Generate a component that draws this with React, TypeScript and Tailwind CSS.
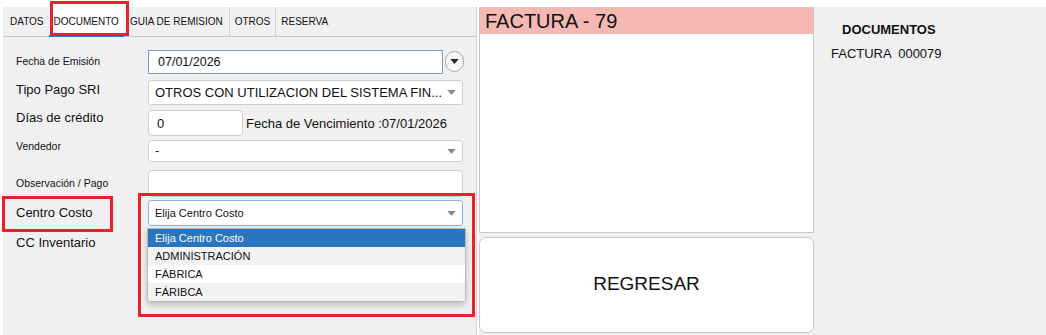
const Caret = ({ className }: { className?: string }) => (
    <svg className={className} viewBox="0 0 10 6" fill="currentColor">
        <path d="M0 0h10L5 6z" />
    </svg>
);

const TABS = [
    { label: 'DATOS', cls: 'pl-[7px] pr-[5px]' },
    { label: 'DOCUMENTO', cls: 'px-[5px] bg-white border-b-2 border-[#2f78c4] -mb-px', active: true },
    { label: 'GUIA DE REMISION', cls: 'px-[6px] border-r border-[#cfcfcf]' },
    { label: 'OTROS', cls: 'px-[5px] border-r border-[#cfcfcf]' },
    { label: 'RESERVA', cls: 'px-[5px]' },
];

const CENTROS = ['Elija Centro Costo', 'ADMINISTRACIÓN', 'FÁBRICA', 'FÁRIBCA'];

export default function App() {
    return (
        <div className="relative w-[1046px] h-[335px] overflow-hidden bg-white text-[#111] font-['Liberation_Sans',Arial,sans-serif]">
            <div className="flex mt-[7px] h-[328px]">
                {/* left form panel */}
                <div className="ml-[3px] w-[474px] bg-[#f0f0f0] border-r border-[#d4d4d4]">
                    <div className="flex h-[30px] border-b border-[#c9c9c9] text-[10px]">
                        {TABS.map((t) => (
                            <div key={t.label} className={`flex items-center ${t.cls}`}>{t.label}</div>
                        ))}
                    </div>

                    <div className="flex flex-col">
                        <div className="flex mt-[13px] h-[24px]">
                            <div className="w-[145px] pl-[13px] pt-[5px] text-[10.5px] leading-[12px]">Fecha de Emisión</div>
                            <div className="w-[295px] h-full bg-white border border-[#7f9db9] pl-[9px] flex items-center text-[12.5px]">07/01/2026</div>
                            <div className="ml-[2px] mt-[1px] w-[19px] h-[21px] rounded-full border border-[#a8a8a8] bg-[#f7f7f7] flex items-center justify-center">
                                <Caret className="w-[9px] h-[5px] text-[#222]" />
                            </div>
                        </div>

                        <div className="flex mt-[6px] h-[25px]">
                            <div className="w-[145px] pl-[13px] pt-[2px] text-[13px] leading-[15px]">Tipo Pago SRI</div>
                            <div className="w-[315px] h-full bg-white border border-[#cdcdcd] rounded-[3px] pl-[6px] pr-[6px] flex items-center justify-between text-[13px]">
                                <span>OTROS CON UTILIZACION DEL SISTEMA FIN...</span>
                                <Caret className="w-[9px] h-[5px] text-[#8a8a8a]" />
                            </div>
                        </div>

                        <div className="flex mt-[5px] h-[26px]">
                            <div className="w-[145px] pl-[13px] text-[13px] leading-[15px]">Días de crédito</div>
                            <div className="w-[95px] h-full bg-white border border-[#cdcdcd] rounded-[4px] pl-[8px] pt-[2px] flex items-center text-[13px]">0</div>
                            <div className="ml-[3px] pt-[6px] text-[13px] leading-[15px]">Fecha de Vencimiento :07/01/2026</div>
                        </div>

                        <div className="flex mt-[4px] h-[22px]">
                            <div className="w-[145px] pl-[13px] text-[10.5px] leading-[12px]">Vendedor</div>
                            <div className="w-[315px] h-full bg-white border border-[#cdcdcd] rounded-[3px] pl-[6px] pr-[6px] flex items-center justify-between text-[13px]">
                                <span>-</span>
                                <Caret className="w-[9px] h-[5px] text-[#8a8a8a]" />
                            </div>
                        </div>

                        <div className="flex mt-[8px] h-[27px]">
                            <div className="w-[145px] pl-[13px] pt-[7px] text-[10.5px] leading-[12px]">Observación / Pago</div>
                            <div className="w-[315px] h-full bg-white border border-[#cdcdcd] rounded-[4px]" />
                        </div>

                        <div className="flex mt-[3px] h-[26px]">
                            <div className="w-[145px] pl-[13px] pt-[5px] text-[13px] leading-[15px]">Centro Costo</div>
                            <div className="relative w-[315px] h-full">
                                <div className="w-full h-full bg-white border border-[#86b5e6] rounded-[3px] pl-[6px] pr-[6px] flex items-center justify-between text-[11px]">
                                    <span>Elija Centro Costo</span>
                                    <Caret className="w-[9px] h-[5px] text-[#8a8a8a]" />
                                </div>
                                <div className="absolute left-[-1px] top-[28px] w-[319px] bg-white border border-[#b9b9b9] rounded-b-[4px] shadow-[0_3px_6px_rgba(0,0,0,0.22)] overflow-hidden z-10">
                                    {CENTROS.map((c, i) => (
                                        <div
                                            key={c}
                                            className={`h-[18px] pl-[7px] flex items-center text-[11px] ${i === 0 ? 'bg-[#2b74be] text-white' : i % 2 === 1 ? 'bg-[#f2f2f2]' : 'bg-white'}`}
                                        >
                                            {c}
                                        </div>
                                    ))}
                                </div>
                            </div>
                        </div>

                        <div className="mt-[9px] pl-[13px] text-[13px] leading-[15px]">CC Inventario</div>
                    </div>
                </div>

                {/* middle column */}
                <div className="ml-[2px] w-[335px] flex flex-col bg-[#f0f0f0]">
                    <div className="h-[226px] bg-white border border-[#c8c8c8]">
                        <div className="h-[26px] bg-[#f5b8b3] pl-[5px] text-[20px] leading-[26px]">FACTURA - 79</div>
                    </div>
                    <button className="mt-[4px] h-[96px] rounded-[7px] border border-[#c8c8c8] bg-white text-[19px] flex items-center justify-center pb-[1px]">
                        REGRESAR
                    </button>
                </div>

                {/* right column */}
                <div className="flex-1 bg-[#f0f0f0] pl-[17px] pt-[15px]">
                    <div className="pl-[11px] font-bold text-[13px] leading-[15px]">DOCUMENTOS</div>
                    <div className="mt-[9px] text-[13px] leading-[15px] whitespace-pre">FACTURA  000079</div>
                </div>
            </div>

            {/* red annotation boxes */}
            <div className="absolute left-[50px] top-[1px] w-[79px] h-[35px] border-[3px] border-[#e3242b]" />
            <div className="absolute left-[2px] top-[196px] w-[111px] h-[36px] border-[3px] border-[#e3242b]" />
            <div className="absolute left-[138px] top-[193px] w-[337px] h-[124px] border-[3px] border-[#e3242b]" />
        </div>
    );
}
